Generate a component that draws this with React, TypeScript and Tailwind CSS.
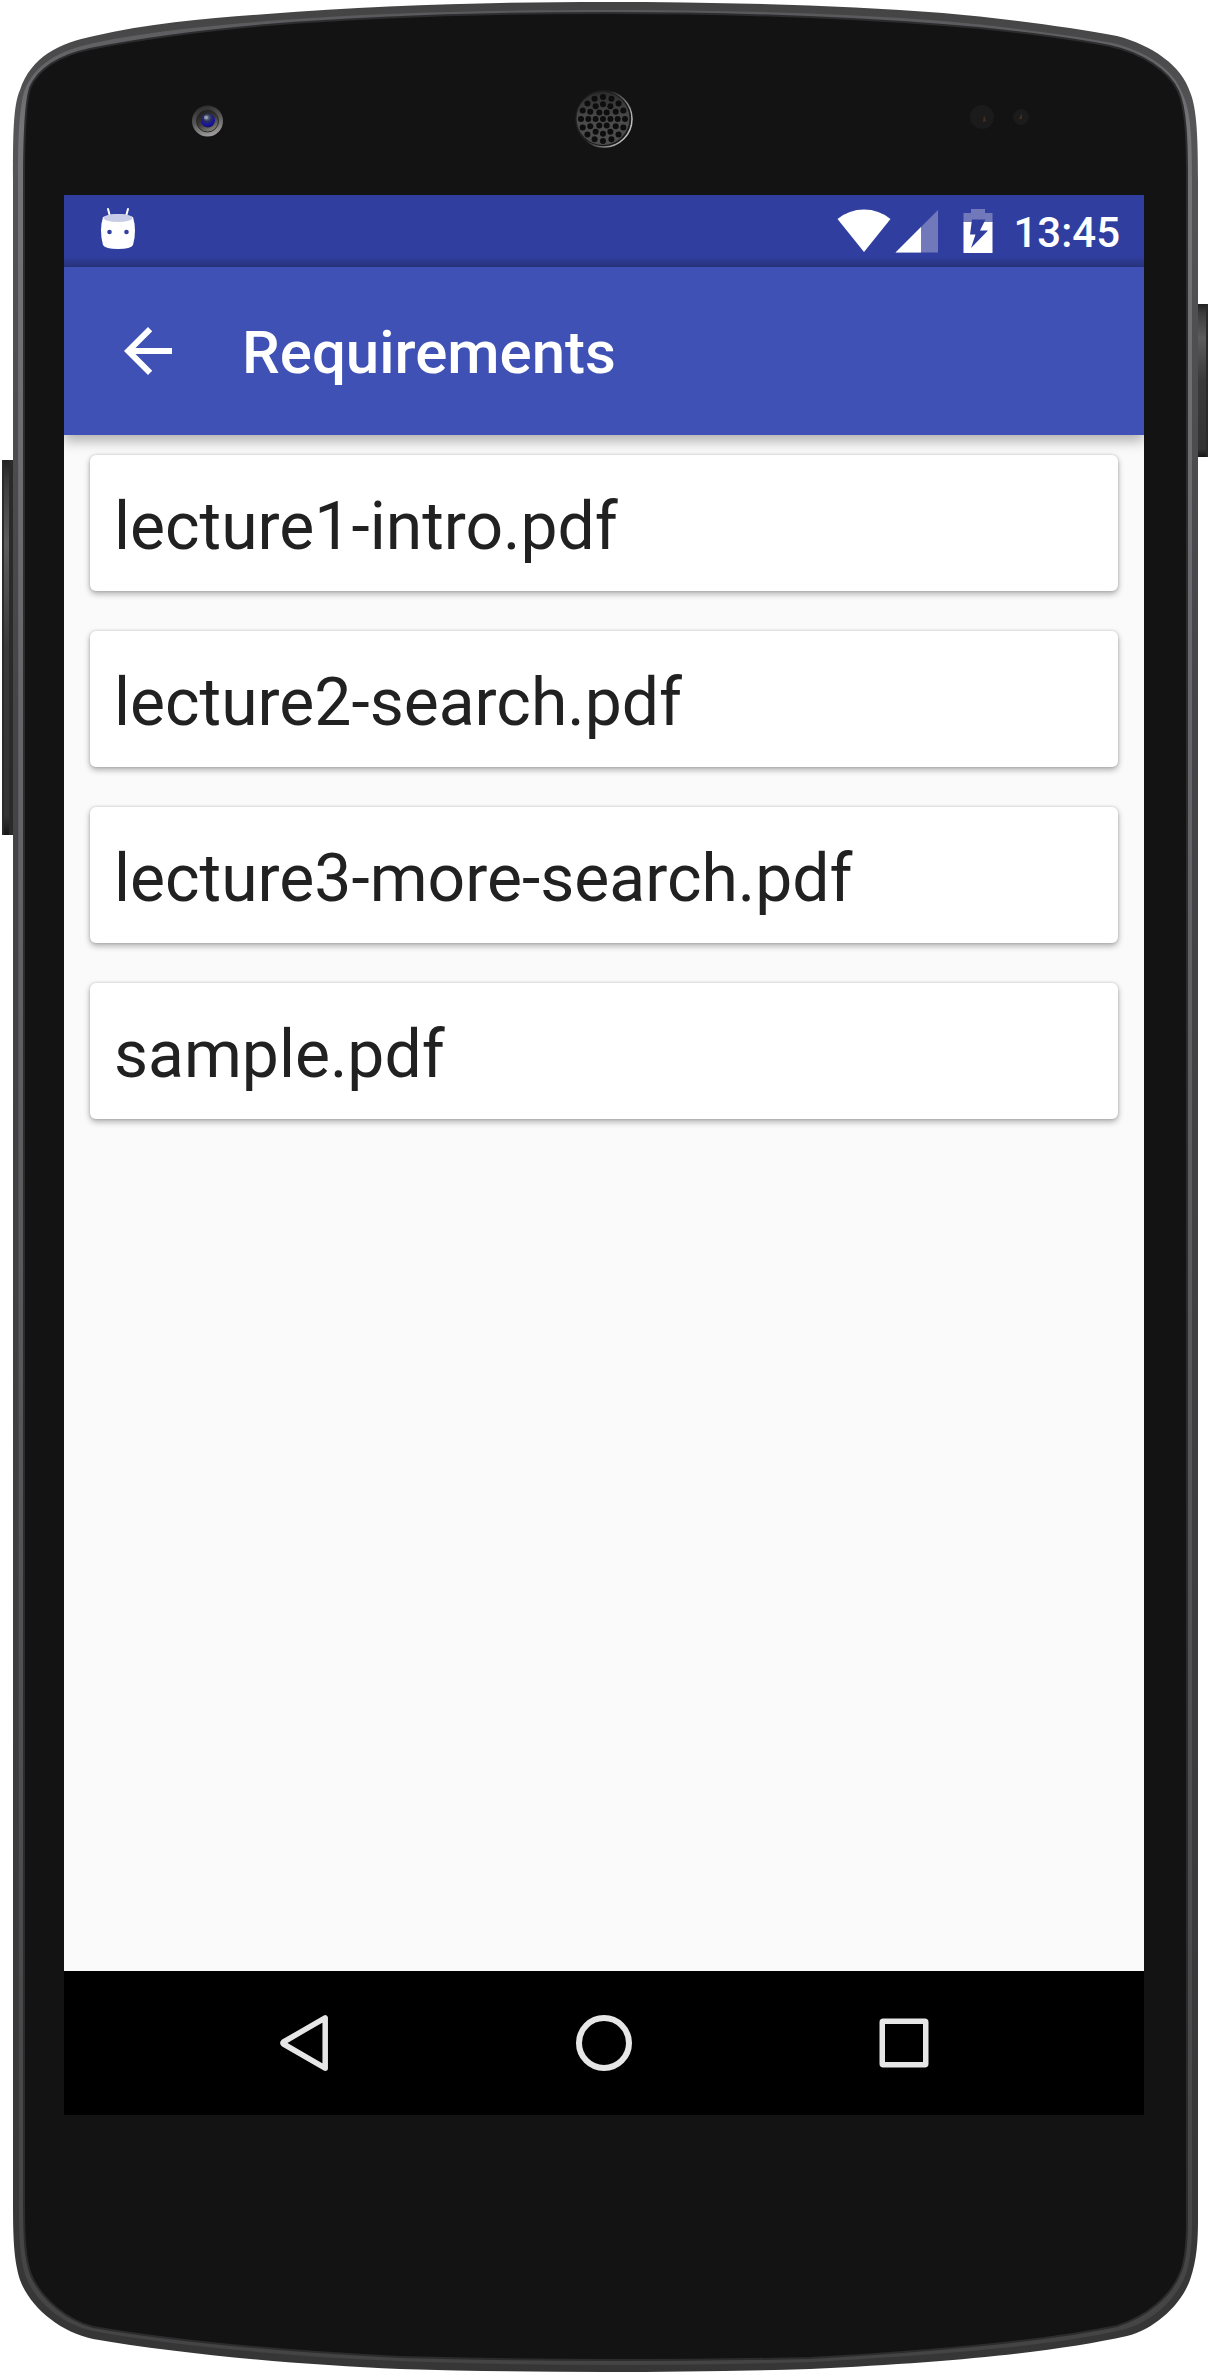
import React from "react";

const files = [
  "lecture1-intro.pdf",
  "lecture2-search.pdf",
  "lecture3-more-search.pdf",
  "sample.pdf",
];

const rings = [
  { count: 1, radius: 0 },
  { count: 6, radius: 7.4 },
  { count: 12, radius: 14.7 },
  { count: 16, radius: 22 },
];

const holes = rings.flatMap(({ count, radius }) =>
  Array.from({ length: count }, (_, i) => {
    const angle = (i / count) * Math.PI * 2;
    return { x: 603 + radius * Math.cos(angle), y: 119 + radius * Math.sin(angle) };
  }),
);

const OUTER =
  "M13 180C13 138 13 105 20 90C31 57 59 43 94 36C150 23 210 18 267 14C380 5 500 2 605 2C720 2 840 5 943 13C1000 18 1070 27 1117 36C1152 45 1182 66 1190 92C1197 108 1198 140 1198 180V2220C1198 2240 1197 2260 1190 2280C1181 2305 1155 2329 1127 2336C1060 2351 960 2362 810 2369C670 2373 540 2373 400 2369C300 2365 180 2354 93 2339C60 2332 30 2307 20 2280C14 2260 13 2240 13 2200Z";
const RAIL =
  "M18 180C18 138 19 112 24 92C34 64 60 50 94 43C150 31 210 26 267 21C380 12 500 10 605 10C720 10 840 13 943 21C1000 26 1070 35 1113 43C1147 52 1174 69 1183 95C1191 112 1192 140 1192 180V2220C1192 2240 1191 2258 1186 2274C1176 2301 1150 2323 1122 2330C1055 2345 955 2354 810 2362C670 2366 540 2366 400 2361C300 2357 180 2347 93 2331C64 2325 36 2303 26 2277C20 2258 19 2240 19 2200Z";
const FACE =
  "M24 180C24 138 25 103 30 88C39 67 62 55 90 49C150 37 210 30 267 25C380 16 500 13 605 13C720 13 840 17 943 25C1000 29 1070 38 1110 46C1142 53 1169 71 1178 91C1186 108 1187 140 1187 180V2220C1187 2240 1186 2258 1181 2271C1172 2296 1146 2317 1117 2326C1050 2340 955 2350 810 2358C670 2361 540 2361 400 2357C300 2352 180 2342 93 2327C66 2320 41 2298 31 2275C25 2258 24 2240 24 2200Z";

function DeviceFrame() {
  return (
    <svg
      className="absolute inset-0 h-full w-full"
      viewBox="0 0 1210 2375"
      preserveAspectRatio="none"
      aria-hidden="true"
    >
      <defs>
        <linearGradient id="edge" x1="0" y1="0" x2="0" y2="1">
          <stop offset="0" stopColor="#434344" />
          <stop offset="0.05" stopColor="#555557" />
          <stop offset="0.3" stopColor="#454547" />
          <stop offset="1" stopColor="#363636" />
        </linearGradient>
        <linearGradient id="rail" x1="0" y1="0" x2="0" y2="1">
          <stop offset="0" stopColor="#59595b" />
          <stop offset="0.05" stopColor="#757578" />
          <stop offset="0.3" stopColor="#66666a" />
          <stop offset="0.8" stopColor="#4c4c4e" />
          <stop offset="1" stopColor="#444445" />
        </linearGradient>
        <linearGradient id="key" x1="0" y1="0" x2="0" y2="1">
          <stop offset="0" stopColor="#222222" />
          <stop offset="0.06" stopColor="#3c3c3c" />
          <stop offset="0.22" stopColor="#5c5c5c" />
          <stop offset="0.5" stopColor="#3a3a3a" />
          <stop offset="0.95" stopColor="#333333" />
          <stop offset="1" stopColor="#161616" />
        </linearGradient>
        <linearGradient id="lensRing" x1="0.3" y1="0" x2="0.6" y2="1">
          <stop offset="0" stopColor="#2a2a2a" />
          <stop offset="0.5" stopColor="#5a5a5a" />
          <stop offset="1" stopColor="#a0a0a0" />
        </linearGradient>
        <linearGradient id="lensInner" x1="0.2" y1="0" x2="0.7" y2="1">
          <stop offset="0" stopColor="#1c1c1c" />
          <stop offset="0.5" stopColor="#3a3836" />
          <stop offset="1" stopColor="#8a8782" />
        </linearGradient>
        <radialGradient id="lens" cx="0.45" cy="0.3" r="0.7">
          <stop offset="0" stopColor="#6f8090" />
          <stop offset="0.4" stopColor="#2b2f5c" />
          <stop offset="0.75" stopColor="#1512a8" />
          <stop offset="1" stopColor="#1a1450" />
        </radialGradient>
        <linearGradient id="grille" x1="0" y1="0" x2="0" y2="1">
          <stop offset="0" stopColor="#2c2c2c" />
          <stop offset="0.5" stopColor="#4a4a4a" />
          <stop offset="1" stopColor="#4d4d4d" />
        </linearGradient>
        <linearGradient id="rim" x1="0" y1="0" x2="1" y2="0.5">
          <stop offset="0.5" stopColor="#202020" />
          <stop offset="1" stopColor="#bcbcbc" />
        </linearGradient>
      </defs>

      <rect x="2" y="460" width="14" height="375" fill="url(#key)" />
      <rect x="2" y="460" width="2" height="375" fill="#2a2a2a" />
      <rect x="9" y="460" width="4" height="375" fill="#2a2a2a" />
      <rect x="1194" y="304" width="14" height="153" fill="url(#key)" />
      <rect x="1206" y="304" width="2" height="153" fill="#2a2a2a" />

      <path d={OUTER} fill="url(#edge)" />
      <path d={RAIL} fill="url(#rail)" />
      <path d={FACE} fill="#131313" stroke="#2c2c2e" strokeWidth="2" />

      <circle cx="207.5" cy="121" r="15.5" fill="url(#lensRing)" />
      <circle cx="207.5" cy="121" r="11" fill="url(#lensInner)" stroke="#2a2826" />
      <circle cx="208" cy="120.5" r="7" fill="url(#lens)" />
      <circle cx="206" cy="117.5" r="2" fill="#a9b8bd" opacity="0.7" />

      <circle cx="604" cy="119" r="28" fill="#181818" stroke="url(#rim)" strokeWidth="1.5" />
      <circle cx="603" cy="118.5" r="26.5" fill="url(#grille)" />
      {holes.map((hole, i) => (
        <circle key={i} cx={hole.x} cy={hole.y} r="3" fill="#0d0d0d" />
      ))}

      <circle cx="982" cy="117" r="12" fill="#1b1b1b" />
      <path d="M983 122l1-7 2 6z" fill="#4a2c1e" />
      <circle cx="1021" cy="117" r="8" fill="#1b1b1b" />
      <path d="M1019 119l3-6v6z" fill="#4a2c1e" />
    </svg>
  );
}

function StatusBar() {
  return (
    <div className="flex h-[72px] items-center bg-linear-to-b from-[#303f9f] from-85% to-[#28347f] pr-6 pl-9 text-white">
      <svg className="h-12 w-9" viewBox="0 0 36 48" aria-label="Android debug" role="img">
        <path d="M8 2l2.4 9M28 2l-2.4 9" stroke="white" strokeWidth="2" strokeLinecap="round" />
        <path
          d="M3 10Q18 4 33 10Q37 23 33 38Q31 42 18 42Q5 42 3 38Q-1 23 3 10Z"
          fill="white"
        />
        <ellipse cx="18" cy="11" rx="14.5" ry="4" fill="#c8cce6" />
        <circle cx="9.500" cy="25" r="2.300" fill="#303f9f" />
        <circle cx="26.500" cy="25" r="2.300" fill="#303f9f" />
      </svg>
      <div className="ml-auto flex items-center">
        <svg className="mr-1 h-11 w-[54px]" viewBox="0 0 54 44" aria-label="Wi-Fi" role="img">
          <path d="M0.500 10Q12 0.500 27 0.500T53.500 10L27 43Z" fill="white" />
        </svg>
        <svg className="mr-6 h-11 w-11" viewBox="0 0 44 44" aria-label="Signal" role="img">
          <path d="M0.500 43.500L43 1V43.500Z" fill="#7279bb" />
          <path d="M0.500 43.500L26 18V43.500Z" fill="white" />
        </svg>
        <svg className="mr-5 h-11 w-[30px]" viewBox="0 0 30 44" aria-label="Battery charging" role="img">
          <path d="M8 0H22V4H29.500V14H0.500V4H8Z" fill="#7279bb" />
          <path d="M0.500 13H29.500V44H0.500Z" fill="white" />
          <path d="M9 10.500H22.500L17 21.500H25L8 39L12.500 25.500H7Z" fill="#303f9f" />
        </svg>
        <time className="pt-1 text-[42px] leading-[48px] font-medium">13:45</time>
      </div>
    </div>
  );
}

function Toolbar() {
  return (
    <header className="relative z-10 flex h-[168px] items-center bg-[#3f51b5] px-12 text-white shadow-[0_6px_12px_rgba(0,0,0,0.3)]">
      <button type="button" aria-label="Back" className="mr-[58px] shrink-0">
        <svg className="h-[72px] w-[72px]" viewBox="0 0 24 24" fill="currentColor">
          <path d="M20 11H7.830l5.590-5.590L12 4l-8 8 8 8 1.410-1.410L7.830 13H20v-2z" />
        </svg>
      </button>
      <h1 className="pt-1 text-[60px] leading-[72px] font-medium">Requirements</h1>
    </header>
  );
}

function NavigationBar() {
  return (
    <nav className="flex h-36 bg-black px-[90px]">
      <button type="button" aria-label="Back" className="flex flex-1 items-center justify-center">
        <svg className="h-[60px] w-[60px]" viewBox="0 0 60 60" fill="none" stroke="#e6e6e6" strokeWidth="5.500" strokeLinejoin="round">
          <path d="M51.200 4.800V55.200L9.500 31Q8.500 30 9.500 29Z" />
        </svg>
      </button>
      <button type="button" aria-label="Home" className="flex flex-1 items-center justify-center">
        <svg className="h-[60px] w-[60px]" viewBox="0 0 60 60" fill="none" stroke="#e6e6e6" strokeWidth="6">
          <circle cx="30" cy="30" r="25" />
        </svg>
      </button>
      <button type="button" aria-label="Recent apps" className="flex flex-1 items-center justify-center">
        <svg className="h-[60px] w-[60px]" viewBox="0 0 60 60" fill="none" stroke="#e6e6e6" strokeWidth="5.500">
          <rect x="8.250" y="8.250" width="43.500" height="43.500" rx="1" />
        </svg>
      </button>
    </nav>
  );
}

export default function App() {
  return (
    <div className="relative flex min-h-screen flex-col bg-white pt-[195px] pr-[66px] pb-[260px] pl-16 font-['Roboto',sans-serif]">
      <DeviceFrame />
      <div className="relative flex flex-1 flex-col overflow-hidden bg-[#fafafa]">
        <StatusBar />
        <Toolbar />
        <main className="flex-1 px-[26px] py-5">
          <ul className="flex flex-col gap-10">
            {files.map((file) => (
              <li key={file}>
                <button
                  type="button"
                  className="block w-full rounded-md bg-white px-6 pt-8 pb-6 text-left text-[66px] leading-[80px] text-[#212121] shadow-[0_3px_6px_rgba(0,0,0,0.3),0_0_3px_rgba(0,0,0,0.18)]"
                >
                  {file}
                </button>
              </li>
            ))}
          </ul>
        </main>
        <NavigationBar />
      </div>
    </div>
  );
}
